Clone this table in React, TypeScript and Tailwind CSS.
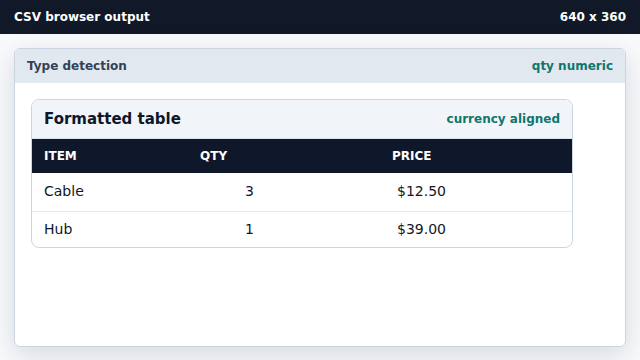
const rows = [
  { item: "Cable", qty: "3", price: "$12.50" },
  { item: "Hub", qty: "1", price: "$39.00" },
];

export default function App() {
  return (
    <div className="flex h-[360px] w-[640px] flex-col bg-[#f8fafc] font-['DejaVu_Sans',sans-serif]">
      <header className="flex h-[34px] shrink-0 items-center justify-between bg-[#111827] px-[14px] text-[12px] font-bold text-white">
        <span>CSV browser output</span>
        <span>640 x 360</span>
      </header>

      <main className="flex flex-1 flex-col px-[14px] pt-[14px] pb-[13px]">
        <section className="flex flex-1 flex-col overflow-hidden rounded-md border border-[#cbd5e1] bg-white shadow-[0_8px_28px_rgba(15,23,42,0.14)]">
          <div className="flex h-[34px] items-center justify-between bg-[#e2e8f0] px-3 text-[12px] font-bold">
            <span className="text-[#334155]">Type detection</span>
            <span className="text-[#0f766e]">qty numeric</span>
          </div>

          <div className="p-4">
            <div className="w-[542px] overflow-hidden rounded-lg border border-[#cbd5e1]">
              <div className="flex h-[39px] items-center justify-between border-b border-[#dbe3ec] bg-[#f1f5f9] px-3">
                <span className="text-[15px] font-bold text-[#0f172a]">Formatted table</span>
                <span className="text-[12px] font-bold text-[#0f766e]">currency aligned</span>
              </div>

              <table className="w-full table-fixed border-collapse">
                <thead>
                  <tr className="h-[34px] bg-[#0f172a] text-left text-[12px] font-bold text-white">
                    <th className="w-[156px] px-3">ITEM</th>
                    <th className="w-[192px] px-3">QTY</th>
                    <th className="px-3">PRICE</th>
                  </tr>
                </thead>
                <tbody className="text-[14px] text-[#0f172a]">
                  {rows.map((r, i) => (
                    <tr key={r.item} className={i === 0 ? "h-[38px] border-b border-[#e2e8f0]" : "h-[36px]"}>
                      <td className="px-3">{r.item}</td>
                      <td className="px-3">
                        <span className="inline-block w-[54px] text-right">{r.qty}</span>
                      </td>
                      <td className="px-3">
                        <span className="inline-block w-[54px] text-right">{r.price}</span>
                      </td>
                    </tr>
                  ))}
                </tbody>
              </table>
            </div>
          </div>
        </section>
      </main>
    </div>
  );
}
